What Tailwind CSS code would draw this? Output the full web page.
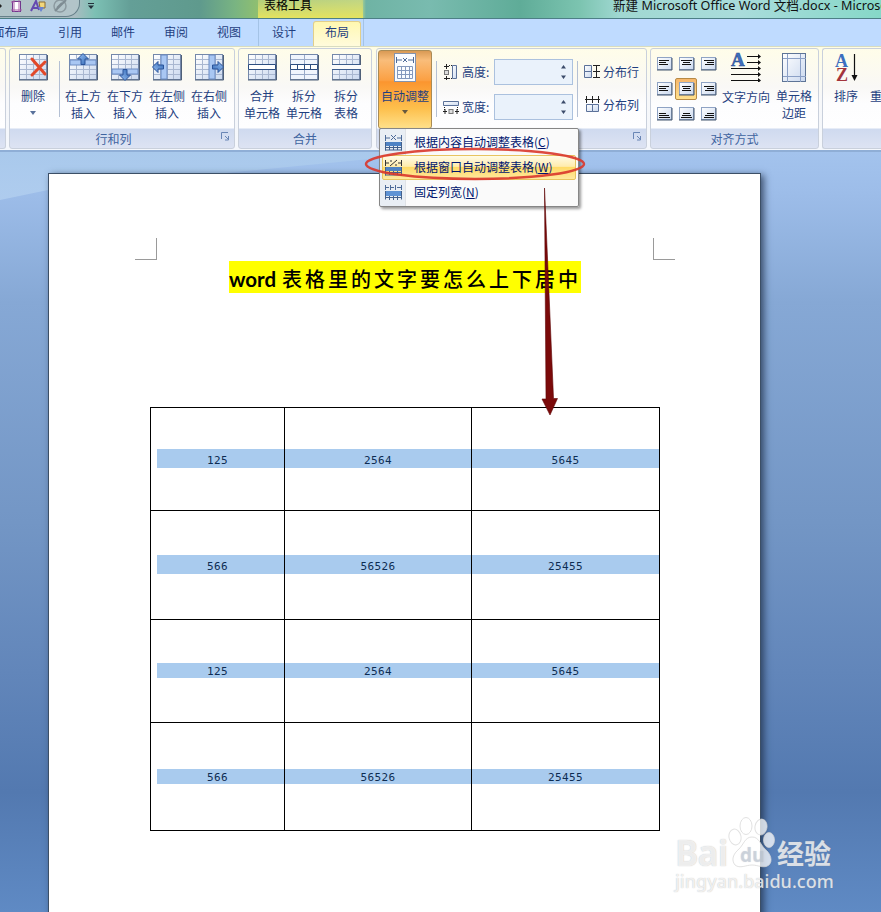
<!DOCTYPE html>
<html lang="zh-CN">
<head>
  <meta charset="UTF-8" />
  <meta name="viewport" content="width=device-width, initial-scale=1.0" />
  <title>新建 Microsoft Office Word 文档.docx - Microsoft Word</title>
  <script src="https://cdn.jsdelivr.net/npm/@tailwindcss/browser@4"></script>
  <style>
    body { font-family: "Noto Sans", "Noto Sans CJK SC", sans-serif; }
    .cjk { font-family: "Noto Sans CJK SC", sans-serif; }
    .group { background: linear-gradient(#fffde9 0%, #f9f8f6 38%, #fdfdfe 55%, #fefeff 79px, #cfdaef 80px, #dde3f3 100%); }
  </style>
</head>
<body class="relative w-[881px] h-[912px] overflow-hidden flex flex-col text-[12px] text-[#1f3f7f]">

  <!-- Símbolos compartidos -->
  <svg class="absolute w-0 h-0">
    <defs>
      <linearGradient id="cell" x1="0" y1="0" x2="1" y2="1"><stop offset="0" stop-color="#fff" /><stop offset="1" stop-color="#cbd9ef" /></linearGradient>
      <linearGradient id="arrow" x1="0" y1="0" x2="1" y2="1"><stop offset="0" stop-color="#9cc4f5" /><stop offset="1" stop-color="#2f66b4" /></linearGradient>
      <symbol id="grid" viewBox="0 0 30 28">
        <rect x="1.5" y="1.5" width="27" height="25" fill="url(#cell)" stroke="#7488aa" />
        <path d="M8.5 2v24M15.5 2v24M21.5 2v24M2 6.500h26M2 11.500h26M2 16.500h26M2 21.500h26" stroke="#a9b7d0" />
        <path d="M1 27h28.500v-25" fill="none" stroke="#4f6078" />
      </symbol>
      <symbol id="up" viewBox="0 0 12 12"><path d="M6 .5L11.500 6H8v5.500H4V6H.5z" fill="url(#arrow)" stroke="#2b559b" /></symbol>
      <symbol id="doc" viewBox="0 0 16 14">
        <rect x=".5" y=".5" width="14" height="12" fill="url(#cell)" stroke="#8fa3c4" />
        <path d="M0 13h15V1" fill="none" stroke="#44566f" />
      </symbol>
      <symbol id="launch" viewBox="0 0 9 9">
        <path d="M.5 7V.5H7M4 4l3 3M7.500 4v4H4" fill="none" stroke="#6a86b5" />
      </symbol>
    </defs>
  </svg>

  <!-- Barra de título -->
  <header class="h-[19px] shrink-0 flex overflow-hidden border-b border-[#4d7f86] bg-[linear-gradient(90deg,#a5b8bd_0,#a9bcc1_75px,#7cc0b4_95px,#649f97_130px,#5f9a8d_200px,#79b482_235px,#8fbf70_258px,#b8d88a_361px,#6fb3a4_366px,#79bbaf_430px,#5fac98_520px,#7cc4b0_580px,#a0d8d2_620px,#a9dcdb_740px,#86d8c8_881px)]">
    <div class="w-[80px] shrink-0 h-[17px] flex rounded-br-[14px] border-r border-b border-[#66808a] bg-[#b9c9ce]/60">
      <svg width="78" height="16" viewBox="0 0 78 16">
        <path d="M0 4l2 2-2 2z" fill="#222" />
        <rect x="12.500" y="1.500" width="8" height="10" fill="#fff" stroke="#71378c" /><path d="M11 2h3M14 0v12M19 0v12M11 10h11" stroke="#a860a8" />
        <path d="M31 11L36 1l3 9M33 8h5" fill="none" stroke="#654ab0" stroke-width="2" /><path d="M39 2h6v6h-5z" fill="#f2d77c" stroke="#8a6c35" /><path d="M38 7h6l-3 5z" fill="#6b83d0" />
        <circle cx="60" cy="6" r="6" fill="none" stroke="#8c9aa0" stroke-width="1.500" /><path d="M55 11L66 0M57 8l5-5" stroke="#7e8c93" stroke-width="2" />
      </svg>
    </div>
    <svg class="ml-[7px] mt-[2px] shrink-0" width="8" height="8" viewBox="0 0 8 8"><path d="M1 1.500h6" stroke="#23313b" /><path d="M1 3.500h6L4 7z" fill="#23313b" /></svg>
    <div class="cjk ml-[163px] w-[105px] shrink-0 h-[22px] -mt-[4px] pl-[6px] leading-[18px] bg-linear-to-b from-[#b9cf8a]/60 to-[#e4e35f] text-black">表格工具</div>
    <div class="ml-[250px] shrink-0 -mt-[3px] whitespace-nowrap text-[12.6px] leading-[18px] text-[#111]">新建 Microsoft Office Word 文档.docx - Microsoft Word</div>
  </header>

  <!-- Pestañas -->
  <nav class="cjk h-[27px] shrink-0 flex bg-[#bfdbff] leading-[26px] text-center">
    <div class="w-[51px] -ml-[15px]">面布局</div>
    <div class="w-[68px]">引用</div>
    <div class="w-[38px]">邮件</div>
    <div class="w-[68px]">审阅</div>
    <div class="w-[38px]">视图</div>
    <div class="ml-[10px] w-[53px] border-l border-[#a4c3e6] pr-[2px]">设计</div>
    <div class="w-[48px] mt-[2px] mx-[2px] rounded-t-[3px] border border-b-0 border-[#e2cf8a] bg-linear-to-b from-[#fff8b0] to-[#fffbdc] leading-[20px]">布局</div>
    <div class="w-px bg-[#a4c3e6]"></div>
  </nav>

  <!-- Cinta de opciones -->
  <section class="cjk h-[106px] shrink-0 flex gap-[3px] pt-px border-t border-[#d8dcc0] bg-linear-to-b from-[#fffde4] via-[#f7f8fa] to-[#f4f7fc] border-b-2 border-b-[#8faed6] leading-[17px] text-center whitespace-nowrap">
    <div class="group w-[6px] h-[101px] border border-l-0 border-[#c9d0dc] rounded-r-[3px]"></div>

    <!-- Filas y columnas -->
    <div class="group w-[226px] h-[101px] border border-[#c9d0dc] rounded-[3px] flex flex-col">
      <div class="flex h-[80px] pt-[4px]">
        <div class="w-[46px] flex flex-col items-center">
          <svg class="mb-[6px]" width="30" height="28"><use href="#grid" /><path d="M14 6l13 15M27 9L14 22" stroke="#e2492a" stroke-width="3" stroke-linecap="round" /></svg>
          <span>删除</span>
          <svg class="mt-[7px]" width="6" height="4"><path d="M0 0h6L3 4z" fill="#59719b" /></svg>
        </div>
        <div class="w-px h-[56px] mt-[8px] ml-[3px] mr-[2px] bg-[#b4c0d4]"></div>
        <div class="w-[42px] flex flex-col items-center">
          <svg class="mb-[6px]" width="30" height="28"><use href="#grid" /><path d="M2 7h26v5H2z" fill="#a9c7f3" stroke="#6c8cc2" /><use href="#up" x="9" y="0" width="12" height="12" /></svg>
          在上方<br />插入
        </div>
        <div class="w-[42px] flex flex-col items-center">
          <svg class="mb-[6px]" width="30" height="28"><use href="#grid" /><path d="M2 16h26v5H2z" fill="#a9c7f3" stroke="#6c8cc2" /><use href="#up" x="9" y="-28" width="12" height="12" transform="scale(1 -1)" /></svg>
          在下方<br />插入
        </div>
        <div class="w-[42px] flex flex-col items-center">
          <svg class="mb-[6px]" width="30" height="28"><use href="#grid" /><path d="M9 2h6v24H9z" fill="#a9c7f3" stroke="#6c8cc2" /><use href="#up" x="8" y="0" width="12" height="12" transform="rotate(-90) translate(-28 0)" /></svg>
          在左侧<br />插入
        </div>
        <div class="w-[42px] flex flex-col items-center">
          <svg class="mb-[6px]" width="30" height="28"><use href="#grid" /><path d="M15 2h6v24h-6z" fill="#a9c7f3" stroke="#6c8cc2" /><use href="#up" x="8" y="0" width="12" height="12" transform="translate(30 0) rotate(90)" /></svg>
          在右侧<br />插入
        </div>
      </div>
      <div class="flex h-[19px] text-[#3f64a0] leading-[19px]">
        <span class="flex-1 pr-[4px]">行和列</span>
        <svg class="mt-[3px] mr-[4px]" width="9" height="9"><use href="#launch" /></svg>
      </div>
    </div>

    <!-- Combinar -->
    <div class="group w-[134px] h-[101px] border border-[#c9d0dc] rounded-[3px] flex flex-col">
      <div class="flex h-[80px] pt-[4px] pl-[2px]">
        <div class="w-[42px] flex flex-col items-center">
          <svg class="mb-[6px]" width="30" height="28"><use href="#grid" /><path d="M1.500 11.500h27v5h-27z" fill="#fff" stroke="#2c4d80" /></svg>
          合并<br />单元格
        </div>
        <div class="w-[42px] flex flex-col items-center">
          <svg class="mb-[6px]" width="30" height="28"><use href="#grid" /><path d="M2 2h26v9H2zM2 17h26v9H2z" fill="#f0f5fd" /><path d="M15.500 2v9M15.500 17v9M2 6.500h26M2 21.500h26" stroke="#9aabc9" /><path d="M1.500 11.500h27v5h-27zM8.500 11v6M15.500 11v6M21.500 11v6" fill="#fff" stroke="#2c4d80" /></svg>
          拆分<br />单元格
        </div>
        <div class="w-[42px] flex flex-col items-center">
          <svg class="mb-[6px]" width="30" height="28"><use href="#grid" /><path d="M0 12h30v4H0z" fill="#fbfbfb" /><path d="M1 11.500h28M1 16.500h28" stroke="#3c5c8d" /></svg>
          拆分<br />表格
        </div>
      </div>
      <div class="h-[19px] text-[#3f64a0] leading-[19px]">合并</div>
    </div>

    <!-- Tamaño de celda -->
    <div class="group w-[271px] ml-[1px] h-[101px] border border-[#c9d0dc] rounded-[3px] flex flex-col">
      <div class="flex h-[80px]">
        <div class="w-[54px] h-[79px] ml-px mt-px pt-[2px] rounded-[3px] border border-[#a98b55] bg-[linear-gradient(#d99a55_0,#f9bd7a_12%,#fba043_38%,#fb952f_40%,#fdc04d_75%,#ffe08a_100%)] flex flex-col items-center">
          <svg class="mb-[5px]" width="22" height="29" viewBox="0 0 22 29">
            <rect x=".5" y=".5" width="21" height="28" fill="#fafcff" stroke="#8493ad" />
            <path d="M2.500 4v6M19.500 4v6M3 7h5M14 7h5M9 5l4 4M13 5l-4 4" stroke="#4d6a98" />
            <path d="M3.500 13.500h15v12h-15zM7.500 13v12M11.500 13v12M15.500 13v12M3 17.500h15M3 21.500h15" fill="none" stroke="#8499bd" />
          </svg>
          自动调整
          <svg class="mt-[6px]" width="6" height="4"><path d="M0 0h6L3 4z" fill="#66593f" /></svg>
        </div>
        <div class="w-px h-[56px] mt-[12px] ml-[4px] bg-[#b4c0d4]"></div>
        <div class="ml-[6px] pt-[10px] flex flex-col gap-[9px] leading-[15px]">
          <div class="flex items-center h-[26px]">
            <svg width="16" height="16" viewBox="0 0 16 16"><path d="M1 2.500h5M3.500 0v5M1 14.500h5M3.500 12v4" stroke="#222" /><path d="M6 1.500h3M6 14.500h3" stroke="#222" stroke-dasharray="1 1" /><rect x="1.500" y="6.500" width="4" height="4" fill="#ddd" stroke="#777" /><path d="M9.500 1.500h4v13h-4z" fill="url(#cell)" stroke="#5b7199" /></svg>
            <span class="w-[32px] ml-[3px] pb-[2px] text-left">高度:</span>
            <div class="w-[79px] h-[26px] border border-[#abc1de] bg-[#eaf2fb] flex justify-end items-center pr-[6px]"><svg width="5" height="14"><path d="M0 3.500L2.500 0 5 3.500zM0 10.500L2.500 14 5 10.500z" fill="#3c4c6b" /></svg></div>
          </div>
          <div class="flex items-center h-[26px]">
            <svg width="16" height="16" viewBox="0 0 16 16"><path d="M.5 2.500h15v4h-15z" fill="url(#cell)" stroke="#5b7199" /><path d="M1.500 8v5M14.500 8v5" stroke="#222" stroke-dasharray="1 1" /><path d="M0 12.500h4M2 10v5M12 12.500h4M14 10v5" stroke="#222" /><rect x="6" y="10.500" width="4" height="4" fill="#ddd" stroke="#777" /></svg>
            <span class="w-[32px] ml-[3px] pb-[2px] text-left">宽度:</span>
            <div class="w-[79px] h-[26px] border border-[#abc1de] bg-[#eaf2fb] flex justify-end items-center pr-[6px]"><svg width="5" height="14"><path d="M0 3.500L2.500 0 5 3.500zM0 10.500L2.500 14 5 10.500z" fill="#3c4c6b" /></svg></div>
          </div>
        </div>
        <div class="w-px h-[56px] mt-[12px] ml-[4px] bg-[#b4c0d4]"></div>
        <div class="ml-[6px] pt-[14px] flex flex-col gap-[16px]">
          <div class="flex items-center gap-[2px]"><svg width="17" height="17" viewBox="0 0 17 17"><path d="M.5 2.500h7v6h-7zM.5 8.500h7v6h-7z" fill="url(#cell)" stroke="#5b7199" /><path d="M9 2.500h7M9 8.500h7M9 14.500h7M12.500 2v13" stroke="#222" /></svg>分布行</div>
          <div class="flex items-center gap-[2px]"><svg width="17" height="17" viewBox="0 0 17 17"><path d="M2.500 8.500h6v7h-6zM8.500 8.500h6v7h-6z" fill="url(#cell)" stroke="#5b7199" /><path d="M2.500 0v7M8.500 0v7M14.500 0v7M1 3.500h15" stroke="#222" /></svg>分布列</div>
        </div>
      </div>
      <div class="flex justify-end h-[19px]"><svg class="mt-[3px] mr-[4px]" width="9" height="9"><use href="#launch" /></svg></div>
    </div>

    <!-- Alineación -->
    <div class="group w-[169px] h-[101px] border border-[#c9d0dc] rounded-[3px] flex flex-col">
      <div class="flex h-[80px]">
        <div class="relative grid grid-cols-[repeat(3,22px)] auto-rows-[25px] pt-[8px] pl-[6px]">
          <svg width="16" height="14"><use href="#doc" /><path d="M2 3.500h10M2 5.500h7M2 7.500h9" stroke="#111" /></svg>
          <svg width="16" height="14"><use href="#doc" /><path d="M2 3.500h11M4 5.500h7M3 7.500h9" stroke="#111" /></svg>
          <svg width="16" height="14"><use href="#doc" /><path d="M3 3.500h10M6 5.500h7M4 7.500h9" stroke="#111" /></svg>
          <svg width="16" height="14"><use href="#doc" /><path d="M2 4.500h10M2 6.500h7M2 8.500h9" stroke="#111" /></svg>
          <div class="-ml-[4px] -mt-[4px] w-[22px] h-[22px] pl-[3px] pt-[3px] border border-[#b78a45] rounded-[2px] bg-linear-to-b from-[#f6b76c] to-[#ffe08d]"><svg width="16" height="14"><use href="#doc" /><path d="M3 4.500h9M4 6.500h7M3 8.500h9" stroke="#111" /></svg></div>
          <svg width="16" height="14"><use href="#doc" /><path d="M3 4.500h10M6 6.500h7M4 8.500h9" stroke="#111" /></svg>
          <svg width="16" height="14"><use href="#doc" /><path d="M2 6.500h7M2 8.500h10M2 10.500h11" stroke="#111" /></svg>
          <svg width="16" height="14"><use href="#doc" /><path d="M4 6.500h7M3 8.500h9M2 10.500h11" stroke="#111" /></svg>
          <svg width="16" height="14"><use href="#doc" /><path d="M6 6.500h7M4 8.500h9M3 10.500h10" stroke="#111" /></svg>
        </div>
        <div class="w-[48px] pt-[3px] -ml-px flex flex-col items-center">
          <svg class="mb-[5px]" width="32" height="30" viewBox="0 0 32 30">
            <text x="1" y="14" font-family="Liberation Serif" font-weight="bold" font-size="19" fill="#3d6fbf" stroke="#27498a" stroke-width=".5">A</text>
            <path d="M17 4.500h12M17 10.500h12M1 16.500h28M1 22.500h28M1 28.500h28" stroke="#111" />
            <path d="M28 2l3 2.500-3 2.500zM28 8l3 2.500-3 2.500zM28 14l3 2.500-3 2.500zM28 20l3 2.500-3 2.500zM28 26l3 2.500-3 2.500z" fill="#111" />
          </svg>
          <span class="mt-px">文字方向</span>
        </div>
        <div class="w-[48px] pt-[4px] flex flex-col items-center">
          <svg class="mb-[4px]" width="25" height="30" viewBox="0 0 25 30"><rect x=".5" y=".5" width="23" height="28" fill="url(#cell)" stroke="#5e7496" /><path d="M5.500 1v28M18.500 1v28M1 5.500h23M1 23.500h23" stroke="#8ba0c6" /></svg>
          <span>单元格<br />边距</span>
        </div>
      </div>
      <div class="h-[19px] text-[#3f64a0] leading-[19px]">对齐方式</div>
    </div>

    <!-- Datos -->
    <div class="group flex-1 h-[101px] border border-r-0 border-[#c9d0dc] rounded-l-[3px] flex overflow-hidden pt-[3px] pl-[11px]">
      <div class="w-[24px] flex flex-col items-center">
        <svg class="mb-[5px]" width="24" height="30" viewBox="0 0 24 30">
          <g font-family="Liberation Serif" font-weight="bold" font-size="18"><text x="1" y="15" fill="#3d6fbf">A</text><text x="2" y="29" fill="#a3353c">Z</text></g>
          <path d="M20.500 2v23" stroke="#111" stroke-width="1.200" /><path d="M17.500 23h6l-3 6z" fill="#111" />
        </svg>
        排序
      </div>
      <span class="ml-[12px] mt-[35px]">重复标题行</span>
    </div>
  </section>

  <!-- Área de trabajo -->
  <main class="relative flex-1 pt-[21px] pl-[48px] overflow-hidden bg-[linear-gradient(#a3c3ed_0,#9dbde9_40px,#86a8d5_150px,#7396c5_370px,#6286ba_520px,#5379b0_640px,#5f8ac4_760px)]">
    <div class="absolute left-0 top-0 w-[380px] h-[60px] bg-linear-to-b from-[#a9c9ec] to-[#b8d3f1]/70 [clip-path:polygon(0_0,100%_0,100%_10%,48px_38px,0_48px)]"></div>

    <!-- Hoja -->
    <article class="relative w-[713px] h-[760px] bg-white border border-[#3c4f66] shadow-[3px_2px_7px_0_rgba(30,45,70,0.75)]">
      <div class="flex justify-between pt-[64px] pl-[86px] pr-[85px]">
        <div class="w-[22px] h-[22px] border-r border-b border-[#9a9a9a]"></div>
        <div class="w-[22px] h-[22px] border-l border-b border-[#9a9a9a]"></div>
      </div>
      <h1 class="ml-[180px] mt-px w-[352px] h-[32px] bg-[#ffff00] text-black whitespace-nowrap leading-[36px] flex">
        <span class="w-[53px] font-bold text-[20.500px] font-['Lato']">word</span>
        <span class="cjk font-medium text-[20px] tracking-[3px]">表格里的文字要怎么上下居中</span>
      </h1>

      <!-- Tabla -->
      <div class="ml-[101px] mt-[114px] w-[510px] border-r border-b border-black text-[11px] tracking-[0.38px] leading-[24px] text-center text-[#0d2c52] font-['DejaVu_Sans_Mono']">
        <div class="grid grid-cols-[134px_187px_188px] h-[103px]">
          <div class="border-l border-t border-black pt-[41px] pl-[6px]"><div class="bg-[#a9cbee] h-[19px] pr-[6px]">125</div></div>
          <div class="border-l border-t border-black pt-[41px]"><div class="bg-[#a9cbee] h-[19px]">2564</div></div>
          <div class="border-l border-t border-black pt-[41px]"><div class="bg-[#a9cbee] h-[19px]">5645</div></div>
        </div>
        <div class="grid grid-cols-[134px_187px_188px] h-[109px]">
          <div class="border-l border-t border-black pt-[44px] pl-[6px]"><div class="bg-[#a9cbee] h-[19px] pr-[6px]">566</div></div>
          <div class="border-l border-t border-black pt-[44px]"><div class="bg-[#a9cbee] h-[19px]">56526</div></div>
          <div class="border-l border-t border-black pt-[44px]"><div class="bg-[#a9cbee] h-[19px]">25455</div></div>
        </div>
        <div class="grid grid-cols-[134px_187px_188px] h-[103px] leading-[18px]">
          <div class="border-l border-t border-black pt-[43px] pl-[6px]"><div class="bg-[#a9cbee] h-[15px] pr-[6px]">125</div></div>
          <div class="border-l border-t border-black pt-[43px]"><div class="bg-[#a9cbee] h-[15px]">2564</div></div>
          <div class="border-l border-t border-black pt-[43px]"><div class="bg-[#a9cbee] h-[15px]">5645</div></div>
        </div>
        <div class="grid grid-cols-[134px_187px_188px] h-[108px] leading-[18px]">
          <div class="border-l border-t border-black pt-[46px] pl-[6px]"><div class="bg-[#a9cbee] h-[15px] pr-[6px]">566</div></div>
          <div class="border-l border-t border-black pt-[46px]"><div class="bg-[#a9cbee] h-[15px]">56526</div></div>
          <div class="border-l border-t border-black pt-[46px]"><div class="bg-[#a9cbee] h-[15px]">25455</div></div>
        </div>
      </div>
    </article>
  </main>

  <!-- Menú de autoajuste -->
  <div class="cjk absolute left-[379px] top-[128px] w-[200px] h-[79px] py-[1px] border border-[#868686] rounded-[2px] bg-[linear-gradient(90deg,#e9eef4_25px,#c5cad2_25px,#fafafa_26px)] shadow-[2px_2px_3px_rgba(0,0,0,0.4)] text-[#00156e]">
    <div class="flex items-center h-[25px] pl-[5px]">
      <svg width="17" height="17" viewBox="0 0 17 17"><path d="M.5 1v6M16.500 1v6M1 4h4M12 4h4M6 1l5 5M11 1L6 6" stroke="#4d6a98" /><path d="M0 8h17v4H0z" fill="#4f83c4" /><path d="M.5 8v8.500M16.500 8v8.500M4.500 12v4M8.500 12v4M12.500 12v4M0 13.500h17M0 16h17" fill="none" stroke="#44618c" /></svg>
      <span class="ml-[12px] pb-[2px]">根据内容自动调整表格(<u>C</u>)</span>
    </div>
    <div class="flex items-center h-[25px] mx-[2px] pl-[3px] rounded-[2px] border border-[#e8c45f] bg-[linear-gradient(#fffbe6_0,#ffecad_45%,#ffdb67_50%,#ffe99f_100%)]">
      <svg class="-ml-px" width="17" height="17" viewBox="0 0 17 17"><path d="M.5 1v6M16.500 1v6M1 4h3M13 4h3M5 7l7-6M6 1v2M11 5v2" stroke="#333" /><path d="M0 8h17v4H0z" fill="#4f83c4" /><path d="M.5 8v8.500M16.500 8v8.500M4.500 12v4M8.500 12v4M12.500 12v4M0 13.500h17M0 16h17" fill="none" stroke="#44618c" /></svg>
      <span class="ml-[12px] pb-[2px]">根据窗口自动调整表格(<u>W</u>)</span>
    </div>
    <div class="flex items-center h-[25px] pl-[5px]">
      <svg width="17" height="17" viewBox="0 0 17 17"><path d="M.5 1v5M5.500 1v5M10.500 1v5M16.500 1v5M1 3.500h3M6 3.500h3M12 3.500h4" stroke="#4d6a98" /><path d="M0 7h17v5H0z" fill="#5d92d4" /><path d="M.5 7v8.500M16.500 7v8.500M4.500 12v4M8.500 12v4M12.500 12v4M0 13.500h17" fill="none" stroke="#44618c" /></svg>
      <span class="ml-[12px] pb-[2px]">固定列宽(<u>N</u>)</span>
    </div>
  </div>

  <!-- Anotaciones: elipse y flecha -->
  <svg class="absolute left-0 top-0" width="881" height="420" viewBox="0 0 881 420">
    <ellipse cx="475" cy="164" rx="109" ry="15" fill="none" stroke="#d9362b" stroke-width="2.500" opacity=".9" />
    <path d="M544.500 188L553.500 398.500H557.500L550 415L542 399H546z" fill="#7b0a0a" stroke="#5c0505" stroke-width=".6" />
  </svg>

  <!-- Marca de agua -->
  <div class="absolute left-[675px] top-[816px] w-[160px] text-white/75 [text-shadow:0_0_1px_rgba(130,130,130,0.55)]">
    <div class="flex items-end h-[54px]">
      <span class="w-[53px] text-[35px] leading-[34px] font-bold font-['Open_Sans'] tracking-[-1px]">Bai</span>
      <svg width="47" height="54" viewBox="0 0 47 54">
        <g fill="#fff" fill-opacity=".75" stroke="#d4d4d4" stroke-opacity=".7">
          <ellipse cx="7" cy="21" rx="6" ry="8" transform="rotate(-12 7 21)" />
          <ellipse cx="18" cy="10" rx="6" ry="8.500" />
          <ellipse cx="33" cy="11" rx="6" ry="8" transform="rotate(10 33 11)" />
          <ellipse cx="41" cy="24" rx="5.500" ry="7.500" />
          <path d="M24 21c7 0 8 7 13 12 6 5 8 12 4 16-5 4-11 0-17 0s-12 4-17 0c-4-5-2-11 4-16 5-5 6-12 13-12z" />
        </g>
        <text x="12" y="46" font-family="Open Sans" font-weight="bold" font-size="19" fill="#c3cedd" fill-opacity=".6">du</text>
      </svg>
      <span class="cjk ml-[2px] text-[27px] leading-[34px] font-bold">经验</span>
    </div>
    <div class="text-[18px] leading-[22px] font-medium font-['Noto_Sans']">jingyan.baidu.com</div>
  </div>
</body>
</html>
